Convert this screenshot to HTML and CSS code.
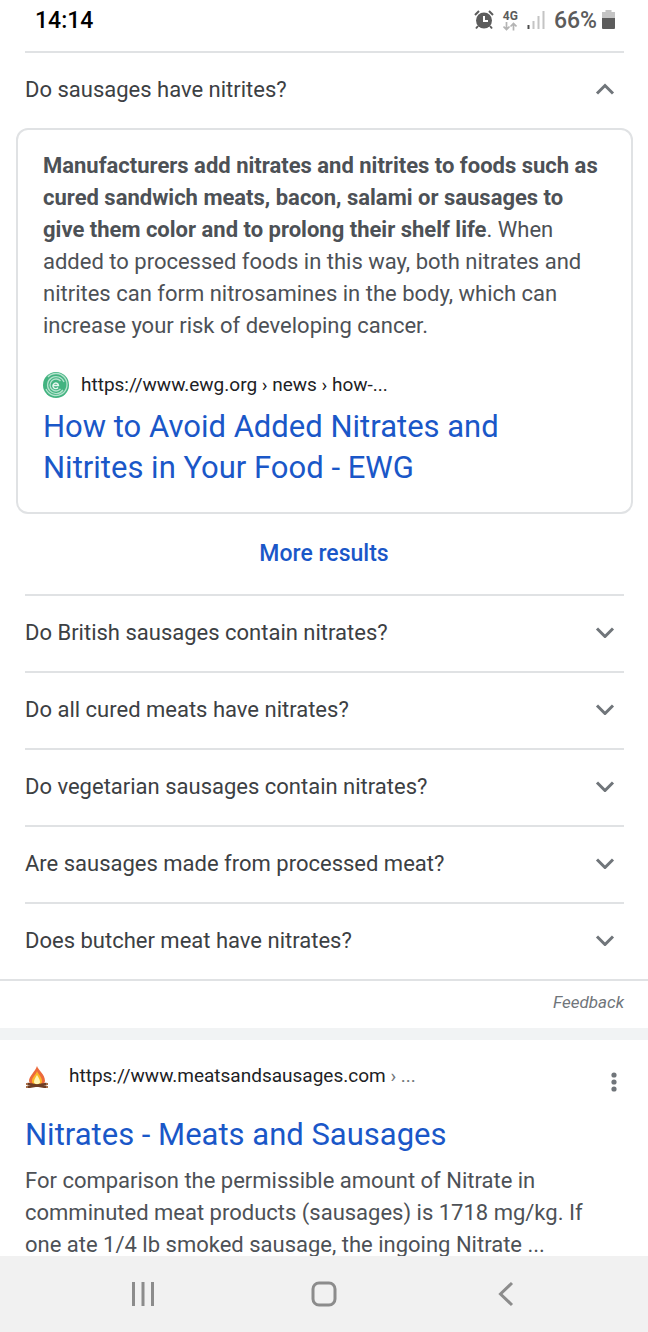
FILE: index.html
```html
<!DOCTYPE html>
<html lang="en">
<head>
  <meta charset="utf-8">
  <meta name="viewport" content="width=device-width, initial-scale=1">
  <title>Do sausages have nitrites?</title>
  <link rel="stylesheet" href="styles.css">
</head>
<body>
  <header class="status-bar">
    <span class="clock">14:14</span>
    <div class="status-icons">
      <svg width="20" height="20" viewBox="0 0 20 20">
        <path d="M1 5L5 1M19 5L15 1M4 16L2 18.500M16 16L18 18.500" stroke="#5c5c5c" stroke-width="2" fill="none"/>
        <circle cx="10" cy="10.500" r="8" fill="#5c5c5c"/>
        <path d="M10 6V11H14" stroke="#fff" stroke-width="2" fill="none"/>
      </svg>
      <div class="network">
        <span>4G</span>
        <svg width="14" height="9" viewBox="0 0 14 9">
          <path d="M3.500 0V7M.5 4.500L3.500 7.500L6.500 4.500M10.500 8.500V1.500M7.500 4.500L10.500 1.500L13.500 4.500" stroke="#b4b4b4" stroke-width="1.700" fill="none"/>
        </svg>
      </div>
      <svg width="18" height="20" viewBox="0 0 18 20">
        <path d="M1.500 15V19" stroke="#4c4c4c" stroke-width="2"/>
        <path d="M6.500 11V19M11.500 6V19M16.500 1V19" stroke="#c4c4c4" stroke-width="2"/>
      </svg>
      <span class="percent">66%</span>
      <svg width="13" height="20" viewBox="0 0 13 20">
        <path d="M3.500 0H9.500V2H13V9H0V2H3.500Z" fill="#c4c4c4"/>
        <path d="M0 8H13V18Q13 19 12 19H1Q0 19 0 18Z" fill="#5c5c5c"/>
      </svg>
    </div>
  </header>

  <main class="results">
    <section class="questions">
      <button class="question" aria-expanded="true">
        Do sausages have nitrites?
        <svg class="chevron" viewBox="0 0 20 12"><path d="M2 10.500L10 2.500L18 10.500"/></svg>
      </button>

      <article class="answer">
        <p class="text"><b>Manufacturers add nitrates and nitrites to foods such as cured sandwich meats, bacon, salami or sausages to give them color and to prolong their shelf life</b>. When added to processed foods in this way, both nitrates and nitrites can form nitrosamines in the body, which can increase your risk of developing cancer.</p>
        <div class="source">
          <svg width="26" height="26" viewBox="0 0 26 26">
            <circle cx="13" cy="13" r="13" fill="#43b380"/>
            <g fill="none" stroke="#b4e2cd" stroke-width="1.300">
              <path d="M5 5A11 11 0 1 1 3 17"/>
              <path d="M20 18A8.500 8.500 0 1 1 21 10"/>
              <path d="M17.500 9A6 6 0 1 0 17.500 17"/>
              <path d="M10.500 13.500H15.500A2.800 2.800 0 1 0 15 15.500" stroke="#e6f6ee" stroke-width="1.400"/>
            </g>
          </svg>
          <span>https://www.ewg.org › news › how-...</span>
        </div>
        <h3 class="title"><a href="#">How to Avoid Added Nitrates and Nitrites in Your Food - EWG</a></h3>
      </article>

      <a class="more" href="#">More results</a>

      <button class="question" aria-expanded="false">
        Do British sausages contain nitrates?
        <svg class="chevron" viewBox="0 0 20 12"><path d="M2 2.500L10 10.500L18 2.500"/></svg>
      </button>
      <button class="question" aria-expanded="false">
        Do all cured meats have nitrates?
        <svg class="chevron" viewBox="0 0 20 12"><path d="M2 2.500L10 10.500L18 2.500"/></svg>
      </button>
      <button class="question" aria-expanded="false">
        Do vegetarian sausages contain nitrates?
        <svg class="chevron" viewBox="0 0 20 12"><path d="M2 2.500L10 10.500L18 2.500"/></svg>
      </button>
      <button class="question" aria-expanded="false">
        Are sausages made from processed meat?
        <svg class="chevron" viewBox="0 0 20 12"><path d="M2 2.500L10 10.500L18 2.500"/></svg>
      </button>
      <button class="question" aria-expanded="false">
        Does butcher meat have nitrates?
        <svg class="chevron" viewBox="0 0 20 12"><path d="M2 2.500L10 10.500L18 2.500"/></svg>
      </button>
    </section>

    <div class="feedback"><a href="#">Feedback</a></div>

    <article class="result">
      <div class="result-head">
        <div class="source">
          <svg width="24" height="24" viewBox="0 0 24 24">
            <path d="M12 2C13 6 20 10 20 17Q20 21 12 21Q4 21 4 17C4 12 10 8 12 2Z" fill="#ec6a3c"/>
            <path d="M12 7C13 10 17 13 17 17Q17 21 12 21Q7 21 7 17C7 13 11 11 12 7Z" fill="#fbb829"/>
            <path d="M12 11C13 13 15 15 15 18Q15 20 12 20Q9 20 9 18C9 15 11 13 12 11Z" fill="#fff6b5"/>
            <path d="M3 20L21 23M3 23L21 20" stroke="#6e3d23" stroke-width="2.600" stroke-linecap="round"/>
            <path d="M1 20H3M21 20H23M1 23H3M21 23H23" stroke="#a8704a" stroke-width="2"/>
          </svg>
          <span>https://www.meatsandsausages.com <span class="path">› ...</span></span>
        </div>
        <button class="menu" aria-label="More options">
          <svg width="6" height="20" viewBox="0 0 6 20" fill="#70757a">
            <circle cx="3" cy="3" r="2.600"/><circle cx="3" cy="10" r="2.600"/><circle cx="3" cy="17" r="2.600"/>
          </svg>
        </button>
      </div>
      <h3 class="title"><a href="#">Nitrates - Meats and Sausages</a></h3>
      <p class="text">For comparison the permissible amount of Nitrate in comminuted meat products (sausages) is 1718 mg/kg. If one ate 1/4 lb smoked sausage, the ingoing Nitrate ...</p>
    </article>
  </main>

  <nav class="nav-bar">
    <button aria-label="Recent apps">
      <svg width="26" height="26" viewBox="0 0 26 26"><path d="M3.500 1V25M13 1V25M22.500 1V25"/></svg>
    </button>
    <button aria-label="Home">
      <svg width="26" height="26" viewBox="0 0 26 26"><rect x="2" y="2" width="22" height="22" rx="6"/></svg>
    </button>
    <button aria-label="Back">
      <svg width="26" height="26" viewBox="0 0 26 26"><path d="M20 2L8.500 13L20 24"/></svg>
    </button>
  </nav>
</body>
</html>
```
FILE: styles.css
```css
* {
  box-sizing: border-box;
}

body {
  display: flex;
  flex-direction: column;
  height: 100vh;
  margin: 0;
  font-family: Roboto, "Liberation Sans", sans-serif;
  font-size: 22px;
  color: #3c4043;
  background-color: #fff;
}

button {
  border: none;
  padding: 0;
  background: none;
  font: inherit;
  color: inherit;
  cursor: pointer;
}

a {
  color: #1a57c8;
  text-decoration: none;
}

svg {
  display: block;
  flex: none;
}

/* Phone status bar */
.status-bar {
  display: flex;
  flex: none;
  justify-content: space-between;
  align-items: center;
  height: 40px;
  padding: 0 33px 0 35px;
}

.clock {
  font-size: 23px;
  font-weight: 500;
  color: #000;
}

.status-icons {
  display: flex;
  align-items: center;
  gap: 9px;
  color: #5c5c5c;
}

.network {
  display: flex;
  flex-direction: column;
  align-items: center;
  font-size: 12px;
  line-height: 12px;
  font-weight: 700;
}

.percent {
  font-size: 23px;
  font-weight: 500;
  margin-right: -4px;
}

/* Search results */
.results {
  flex: 1;
  min-height: 0;
  padding-top: 11px;
  overflow-y: auto;
  scrollbar-width: none;
}

.questions {
  display: flex;
  flex-direction: column;
  border-bottom: 2px solid #e0e2e4;
}

.question {
  display: flex;
  justify-content: space-between;
  align-items: center;
  height: 77px;
  margin: 0 24px 0 25px;
  padding: 0 9px 3px 0;
  border-top: 2px solid #e0e2e4;
  text-align: left;
}

.chevron {
  width: 20px;
  height: 12px;
  fill: none;
  stroke: #70757a;
  stroke-width: 3;
}

.answer {
  margin: 0 15px 0 16px;
  padding: 20px 30px 24px 25px;
  border: 2px solid #e0e2e4;
  border-radius: 12px;
}

.text {
  margin: 0;
  line-height: 32px;
  color: #4d5156;
}

.source {
  display: flex;
  align-items: center;
  gap: 12px;
  font-size: 19px;
  line-height: 24px;
  color: #202124;
}

.answer .source {
  margin: 30px 0 8px;
}

.title {
  margin: 0;
  font-size: 31px;
  line-height: 41px;
  font-weight: 400;
}

.more {
  padding: 26px 0;
  font-size: 23px;
  line-height: 28px;
  font-weight: 500;
  text-align: center;
}

.feedback {
  padding: 10px 24px 15px;
  border-bottom: 12px solid #f1f3f4;
  font-size: 17px;
  line-height: 22px;
  font-style: italic;
  text-align: right;
}

.feedback a {
  color: #70757a;
}

.result {
  padding: 24px 25px 0;
}

.result-head {
  display: flex;
  justify-content: space-between;
  align-items: flex-start;
  margin-bottom: 22px;
}

.result .source {
  gap: 20px;
}

.path {
  color: #70757a;
}

.menu {
  padding: 8px 6px 0;
}

.result .text {
  padding-top: 10px;
}

/* Phone navigation */
.nav-bar {
  display: grid;
  flex: none;
  grid-template-columns: 1fr 1fr 1fr;
  height: 76px;
  padding: 0 52px;
  background-color: #f1f1f1;
}

.nav-bar button {
  display: flex;
  justify-content: center;
  align-items: center;
}

.nav-bar svg {
  fill: none;
  stroke: #8c8c8c;
  stroke-width: 3;
}
```
